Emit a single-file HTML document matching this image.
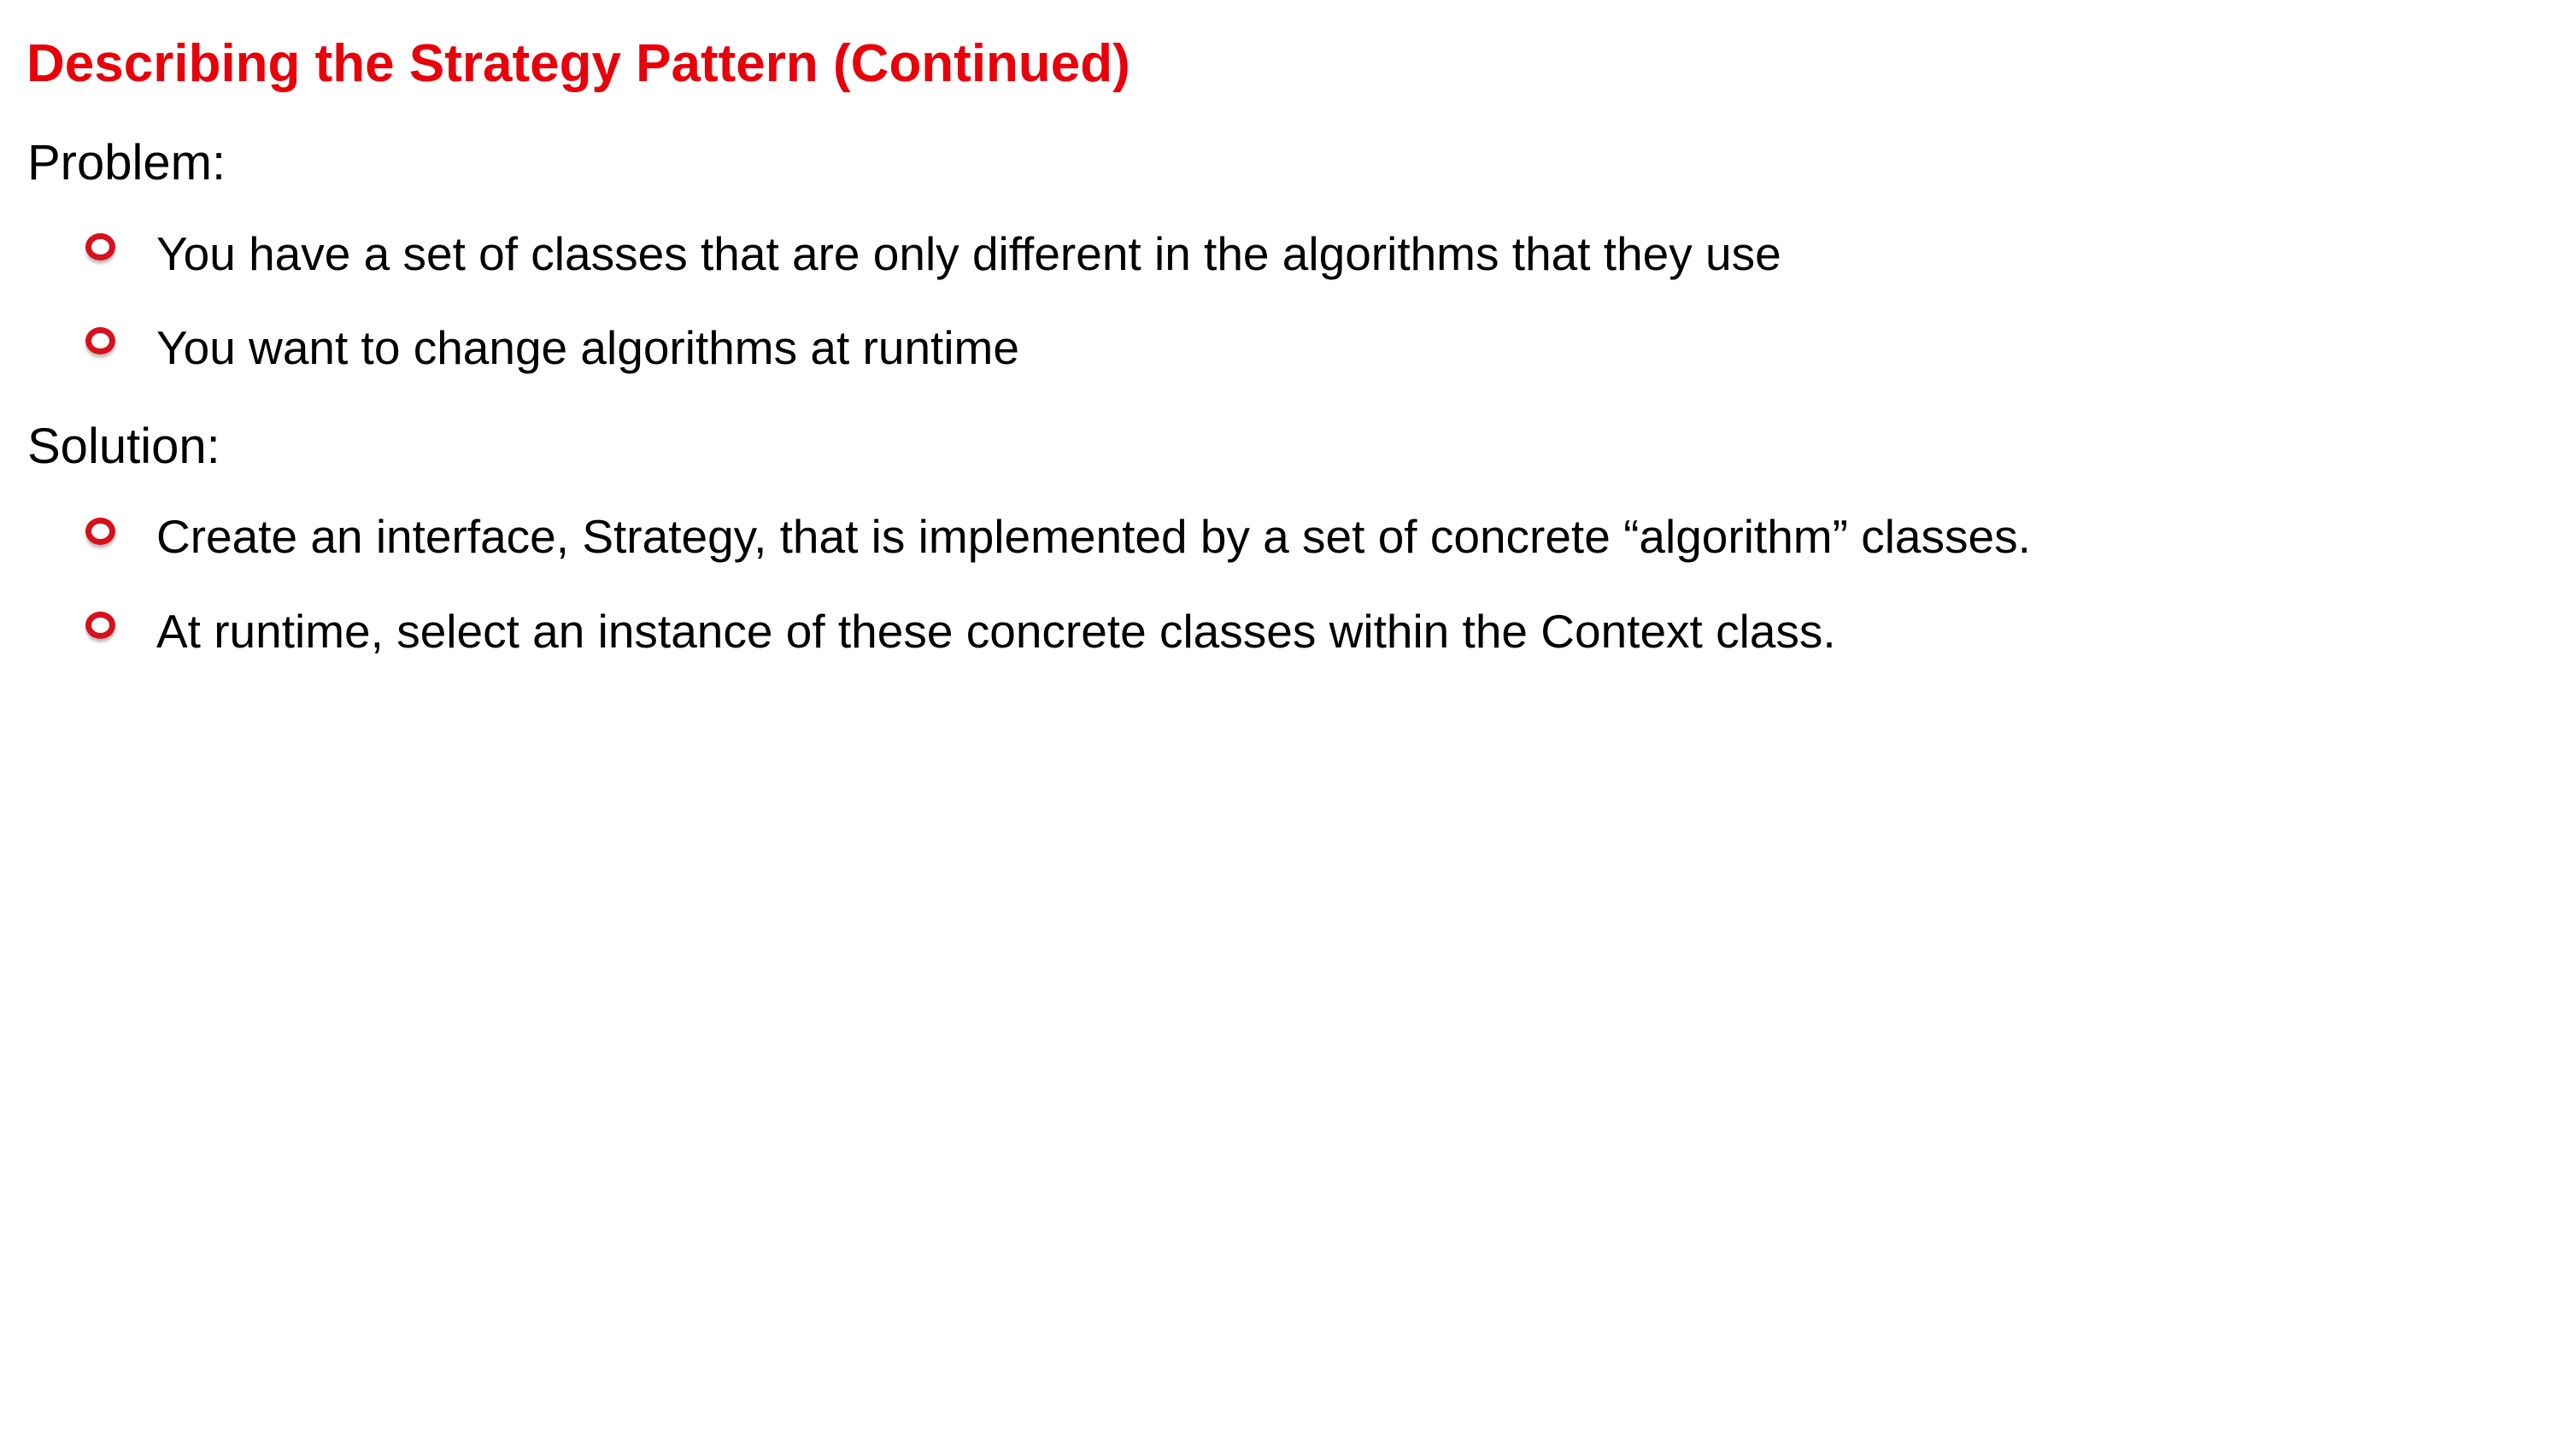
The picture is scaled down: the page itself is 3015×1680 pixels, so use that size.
<!DOCTYPE html>
<html><head><meta charset="utf-8"><style>
html,body{margin:0;padding:0;background:#fff;}
body{width:3015px;height:1680px;position:relative;overflow:hidden;font-family:"Liberation Sans",Arial,sans-serif;color:#000;}
.t{position:absolute;white-space:nowrap;line-height:1;}
.title{left:31px;top:44px;font-size:62px;font-weight:bold;color:#e8000a;}
.h{left:32px;font-size:58px;}
.b{left:183px;font-size:55px;}
.r{position:absolute;left:100px;width:21px;height:18px;border:7px solid #d8101c;border-radius:50%;box-shadow:0 4px 3px rgba(0,0,0,0.25);}
</style></head><body>
<div class="t title">Describing the Strategy Pattern (Continued)</div>
<div class="t h" style="top:162px">Problem:</div>
<div class="r" style="top:273px"></div>
<div class="t b" style="top:270px">You have a set of classes that are only different in the algorithms that they use</div>
<div class="r" style="top:383px"></div>
<div class="t b" style="top:380px">You want to change algorithms at runtime</div>
<div class="t h" style="top:494px">Solution:</div>
<div class="r" style="top:606px"></div>
<div class="t b" style="top:601px">Create an interface, Strategy, that is implemented by a set of concrete “algorithm” classes.</div>
<div class="r" style="top:716px"></div>
<div class="t b" style="top:712px">At runtime, select an instance of these concrete classes within the Context class.</div>
</body></html>
